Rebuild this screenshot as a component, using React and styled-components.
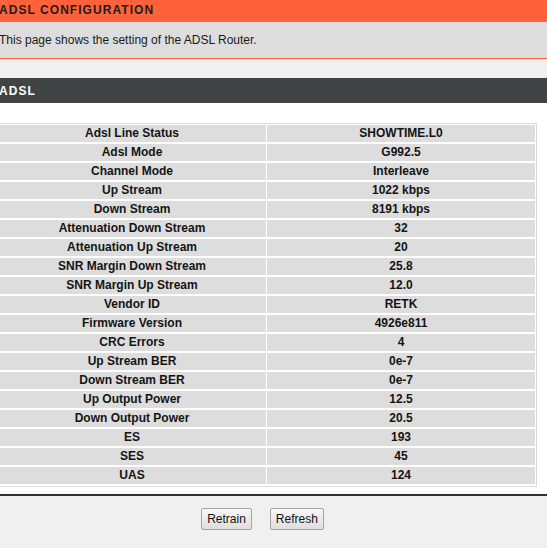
import React from "react";
import styled, { createGlobalStyle } from "styled-components";

const Global = createGlobalStyle`
  html, body { margin: 0; padding: 0; background: #ffffff; overflow: hidden; }
  body { font-family: "Liberation Sans", Arial, sans-serif; font-size: 12px; color: #111; }
`;

const Page = styled.div`
  width: 547px;
  height: 548px;
  display: flex;
  flex-direction: column;
  overflow: hidden;
`;

const TitleBar = styled.div`
  height: 22px;
  flex: none;
  background: #ff623a;
  display: flex;
  align-items: center;
  padding-bottom: 2px;
  box-sizing: border-box;
  font-weight: bold;
  font-size: 12px;
  letter-spacing: 1.05px;
  color: #1c1c1c;
  text-indent: -1px;
`;

const Description = styled.div`
  height: 37px;
  flex: none;
  background: #dddddd;
  border-bottom: 1px solid #ff623a;
  display: flex;
  align-items: center;
  font-size: 12px;
  color: #1a1a1a;
  text-indent: -1px;
  box-sizing: border-box;
`;

const Spacer = styled.div`
  height: 19px;
  flex: none;
  background: #f0f0f0;
`;

const SectionBar = styled.div`
  height: 25px;
  flex: none;
  background: #404445;
  display: flex;
  align-items: center;
  font-weight: bold;
  font-size: 12px;
  letter-spacing: 1.05px;
  color: #ffffff;
  text-indent: -1px;
`;

const Content = styled.div`
  flex: none;
  background: #ffffff;
  padding: 20px 0 7px;
  border-bottom: 2px solid #333333;
`;

const TableWrap = styled.div`
  margin-left: -4px;
  width: 541px;
`;

const Table = styled.table`
  width: 100%;
  border: 1px solid #dadada;
  border-spacing: 1px;
  table-layout: fixed;
`;

const Cell = styled.td`
  background: #dddddd;
  border-bottom: 1px solid #ffffff;
  text-align: center;
  font-weight: bold;
  font-size: 12px;
  color: #141414;
  padding: 1px 0 2px;
  line-height: 14px;
`;

const Footer = styled.div`
  flex: 1;
  background: #f0f0f0;
  display: flex;
  justify-content: center;
  align-items: flex-start;
  gap: 18px;
  padding: 12px 22px 0 0;
`;

const Button = styled.button`
  height: 22px;
  padding: 0 5px;
  font-family: "Liberation Sans", Arial, sans-serif;
  font-size: 12px;
  color: #111;
  background: linear-gradient(#f7f7f7, #dedede);
  border: 1px solid #a3a3a3;
  border-radius: 2px;
`;

const rows = [
  ["Adsl Line Status", "SHOWTIME.L0"],
  ["Adsl Mode", "G992.5"],
  ["Channel Mode", "Interleave"],
  ["Up Stream", "1022 kbps"],
  ["Down Stream", "8191 kbps"],
  ["Attenuation Down Stream", "32"],
  ["Attenuation Up Stream", "20"],
  ["SNR Margin Down Stream", "25.8"],
  ["SNR Margin Up Stream", "12.0"],
  ["Vendor ID", "RETK"],
  ["Firmware Version", "4926e811"],
  ["CRC Errors", "4"],
  ["Up Stream BER", "0e-7"],
  ["Down Stream BER", "0e-7"],
  ["Up Output Power", "12.5"],
  ["Down Output Power", "20.5"],
  ["ES", "193"],
  ["SES", "45"],
  ["UAS", "124"],
];

export default function App() {
  return (
    <Page>
      <Global />
      <TitleBar>ADSL CONFIGURATION</TitleBar>
      <Description>This page shows the setting of the ADSL Router.</Description>
      <Spacer />
      <SectionBar>ADSL</SectionBar>
      <Content>
        <TableWrap>
          <Table>
            <tbody>
              {rows.map(([k, v]) => (
                <tr key={k}>
                  <Cell>{k}</Cell>
                  <Cell>{v}</Cell>
                </tr>
              ))}
            </tbody>
          </Table>
        </TableWrap>
      </Content>
      <Footer>
        <Button>Retrain</Button>
        <Button>Refresh</Button>
      </Footer>
    </Page>
  );
}
